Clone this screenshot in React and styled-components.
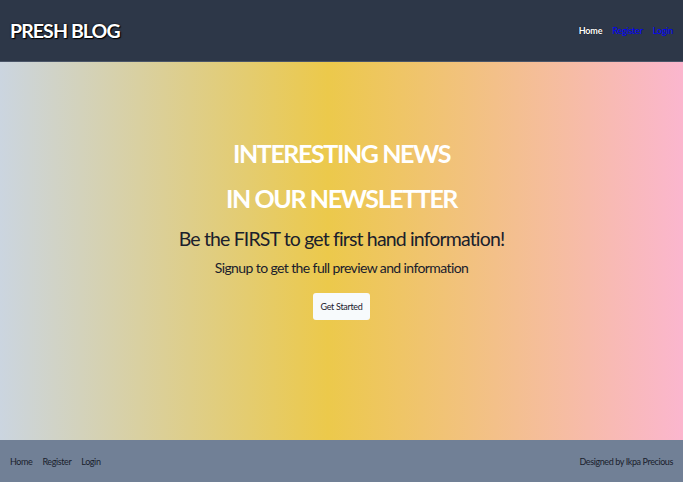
import React from "react";
import styled, { createGlobalStyle } from "styled-components";

const Global = createGlobalStyle`
  html, body { margin: 0; padding: 0; }
  body { font-family: Lato, "Open Sans", sans-serif; }
  #root { min-height: 100vh; display: flex; flex-direction: column; }
`;

const Page = styled.div`
  min-height: 100vh;
  display: flex;
  flex-direction: column;
`;

const Header = styled.header`
  height: 62px;
  background: #2d3748;
  display: flex;
  align-items: center;
  justify-content: space-between;
  padding: 0 10px 0 10px;
  box-sizing: border-box;
  border-bottom: 1px solid #4a5568;
`;

const Logo = styled.h1`
  margin: 0;
  font-size: 19.5px;
  font-weight: 700;
  letter-spacing: -0.9px;
  color: #fff;
  text-shadow: 0 0 2px #000, 1px 1px 1px #000;
`;

const Nav = styled.nav`
  display: flex;
  gap: 10px;
  align-items: center;
`;

const NavLink = styled.a`
  font-size: 9px;
  letter-spacing: -0.2px;
  font-weight: ${(p) => (p.$active ? 700 : 400)};
  color: ${(p) => (p.$active ? "#fff" : "#0000ff")};
  text-decoration: none;
  text-shadow: ${(p) => (p.$active ? "0 0 1px #000" : "none")};
`;

const Hero = styled.main`
  flex: 1;
  background: linear-gradient(to right, #cbd5e0 0%, #ecc94b 48%, #fbb6ce 100%);
  display: flex;
  flex-direction: column;
  align-items: center;
  padding-top: 69px;
`;

const Title = styled.h2`
  margin: 0;
  font-size: 25px;
  line-height: 45px;
  font-weight: 700;
  letter-spacing: -1.4px;
  color: #fff;
  text-align: center;
`;

const Lead = styled.p`
  margin: 0;
  font-size: 19.5px;
  line-height: 36px;
  letter-spacing: -0.85px;
  color: #1a202c;
`;

const Sub = styled.p`
  margin: 0;
  font-size: 14px;
  line-height: 22px;
  letter-spacing: -0.6px;
  color: #1a202c;
`;

const Button = styled.button`
  margin-top: 14px;
  width: 57px;
  height: 27px;
  border: none;
  border-radius: 3px;
  background: #f7fafc;
  font-family: inherit;
  font-size: 9px;
  letter-spacing: -0.3px;
  font-weight: 400;
  color: #1a202c;
  padding: 0;
`;

const Footer = styled.footer`
  height: 42px;
  background: #718096;
  display: flex;
  align-items: center;
  justify-content: space-between;
  padding: 0 10px;
  box-sizing: border-box;
`;

const FootNav = styled.div`
  display: flex;
  gap: 10px;
`;

const FootText = styled.span`
  font-size: 9px;
  letter-spacing: -0.4px;
  color: #1a202c;
`;

export default function App() {
  return (
    <Page>
      <Global />
      <Header>
        <Logo>PRESH BLOG</Logo>
        <Nav>
          <NavLink $active href="#">Home</NavLink>
          <NavLink href="#">Register</NavLink>
          <NavLink href="#">Login</NavLink>
        </Nav>
      </Header>
      <Hero>
        <Title>INTERESTING NEWS<br />IN OUR NEWSLETTER</Title>
        <Lead>Be the FIRST to get first hand information!</Lead>
        <Sub>Signup to get the full preview and information</Sub>
        <Button>Get Started</Button>
      </Hero>
      <Footer>
        <FootNav>
          <FootText>Home</FootText>
          <FootText>Register</FootText>
          <FootText>Login</FootText>
        </FootNav>
        <FootText>Designed by Ikpa Precious</FootText>
      </Footer>
    </Page>
  );
}
